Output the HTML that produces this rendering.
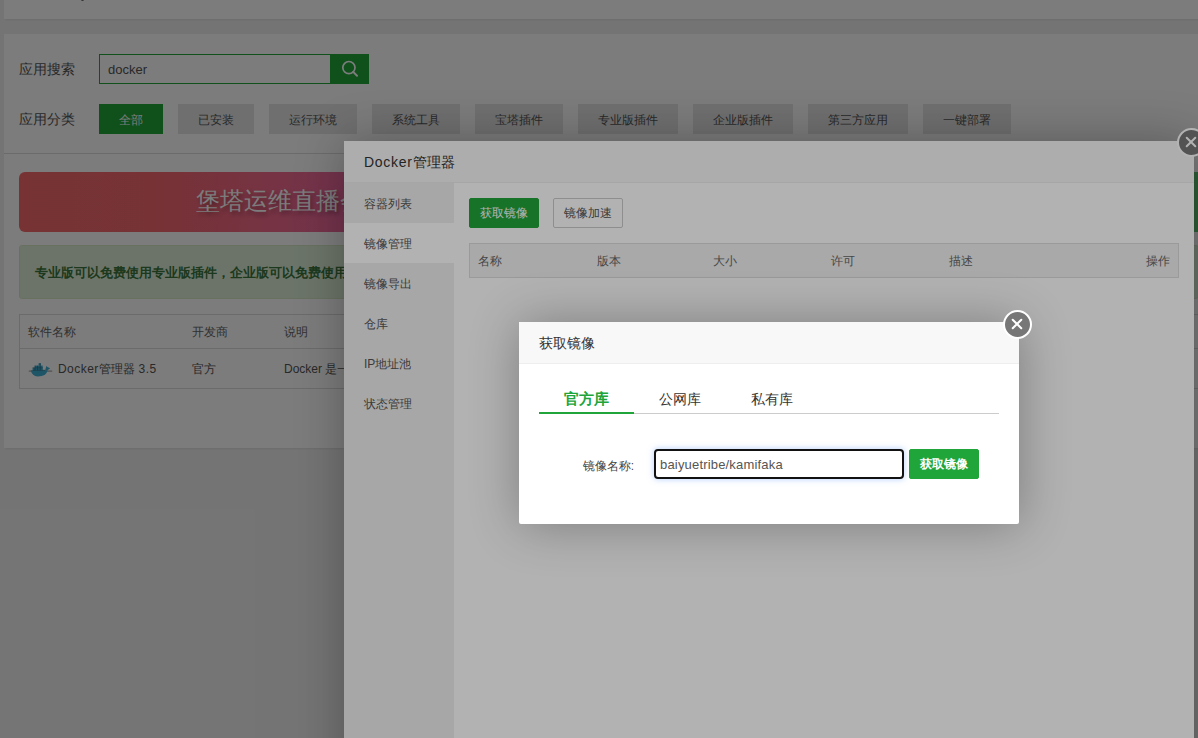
<!DOCTYPE html>
<html><head><meta charset="utf-8">
<style>
*{box-sizing:border-box;margin:0;padding:0}
html,body{width:1198px;height:738px;overflow:hidden}
body{background:#f0f0f0;font-family:"Liberation Sans",sans-serif;font-size:12px;color:#333;position:relative}
.abs{position:absolute}
.box{position:absolute;background:#fff;box-shadow:1px 1px 2px rgba(0,0,0,.08)}
.lbl{position:absolute;font-size:14px;color:#555;line-height:20px}
.cat{position:absolute;top:104px;height:30px;line-height:32px;background:#e6e6e6;color:#555;font-size:12px;text-align:center}
.cat.on{background:#20a53a;color:#fff}
.shade{position:absolute;left:0;top:0;width:1198px;height:738px;background:rgba(0,0,0,.3)}
.dlg{position:absolute;background:#fff;box-shadow:1px 1px 50px rgba(0,0,0,.3);border-radius:2px}
.ttl{position:absolute;left:0;top:0;right:0;height:42px;background:#f8f8f8;border-bottom:1px solid #eee;font-size:14px;color:#333;line-height:42px;padding-left:20px}
.side{position:absolute;left:0;top:42px;width:110px;bottom:0;background:#f0f0f0}
.side div{height:40px;line-height:42px;padding-left:20px;font-size:12px;color:#555}
.side div.on{background:#fff}
.btn{position:absolute;height:30px;line-height:28px;border-radius:2px;font-size:12px;text-align:center}
.green{background:#20a53a;color:#fff;border:1px solid #20a53a}
.white{background:#fff;color:#555;border:1px solid #ccc}
.th{position:absolute;font-size:12px;color:#666;line-height:34px;top:0}
.close{position:absolute;width:29px;height:29px;border-radius:50%;background:#777;border:2.5px solid #fff}
</style></head>
<body>
<!-- main page -->
<div class="box" style="left:4px;top:-20px;width:1200px;height:39px"></div>
<div class="abs" style="left:81px;top:-2px;width:3px;height:3px;background:#666;border-radius:50%"></div>
<div class="box" style="left:4px;top:34px;width:1200px;height:414px">
  <div style="position:absolute;left:0;right:0;top:119px;height:1px;background:#ddd"></div>
</div>
<div class="lbl" style="left:19px;top:59px">应用搜索</div>
<div class="abs" style="left:99px;top:54px;width:232px;height:30px;border:1px solid #20a53a;background:#fff;font-size:13px;color:#555;line-height:30px;padding-left:8px">docker</div>
<div class="abs" style="left:330px;top:54px;width:39px;height:30px;background:#20a53a">
  <svg width="39" height="30" viewBox="0 0 39 30"><circle cx="18.9" cy="13.6" r="6.1" fill="none" stroke="#fff" stroke-width="1.7"/><line x1="23.2" y1="17.9" x2="27" y2="21.7" stroke="#fff" stroke-width="2" stroke-linecap="round"/></svg>
</div>
<div class="lbl" style="left:19px;top:109px">应用分类</div>
<div class="cat on" style="left:99px;width:64px">全部</div>
<div class="cat" style="left:178px;width:76px">已安装</div>
<div class="cat" style="left:269px;width:88px">运行环境</div>
<div class="cat" style="left:372px;width:88px">系统工具</div>
<div class="cat" style="left:475px;width:88px">宝塔插件</div>
<div class="cat" style="left:578px;width:100px">专业版插件</div>
<div class="cat" style="left:693px;width:100px">企业版插件</div>
<div class="cat" style="left:808px;width:100px">第三方应用</div>
<div class="cat" style="left:923px;width:88px">一键部署</div>

<div class="abs" style="left:19px;top:172px;width:1300px;height:60px;border-radius:6px;background:linear-gradient(90deg,#f56a6a 0px,#f46870 150px,#f06aa0 325px,#e070a0 500px,#62c275 1170px);overflow:hidden">
  <div style="position:absolute;left:177px;top:12px;font-size:24px;color:#fff;line-height:34px;text-shadow:2px 3px 4px rgba(0,0,0,.35);letter-spacing:0">堡塔运维直播会</div>
</div>
<div class="abs" style="left:19px;top:245px;width:1180px;height:54px;background:#dff0d8;border:1px solid #d6e9c6;border-radius:3px;color:#3c763d;font-weight:bold;font-size:13px;line-height:53px;padding-left:15px">专业版可以免费使用专业版插件，企业版可以免费使用专业版及企业版插件</div>

<div class="abs" style="left:19px;top:314px;width:1180px;height:75px;border:1px solid #ddd;background:#fff">
  <div style="position:absolute;left:0;right:0;top:33px;height:1px;background:#ddd"></div>
  <div class="th" style="left:8px;color:#666;font-size:12px">软件名称</div>
  <div class="th" style="left:172px;color:#666;font-size:12px">开发商</div>
  <div class="th" style="left:264px;color:#666;font-size:12px">说明</div>
  <div class="abs" style="left:4px;top:40px;width:36px;height:27px">
    <svg width="36" height="27" viewBox="0 0 36 27"><line x1="4.8" y1="16.1" x2="28.2" y2="16.1" stroke="#444" stroke-width="0.6"/><g fill="#3fb0d4"><path d="M6.8 15.2 L23.5 15.2 Q22.5 21.4 13.8 21.4 Q8 21.2 6.8 15.2 Z"/><path d="M21 15.4 Q22 13 22.3 11 Q23.5 12.6 26.2 13.2 Q24.2 14.4 23.3 15.6 Z"/><rect x="8.6" y="12.8" width="10.2" height="2.6"/><rect x="10.8" y="10.6" width="7.9" height="2.3"/><rect x="14.6" y="8.2" width="2.2" height="2.5"/></g><g stroke="#1a5a70" stroke-width="0.5"><line x1="11" y1="10.6" x2="11" y2="15.3"/><line x1="13.6" y1="10.6" x2="13.6" y2="15.3"/><line x1="16.2" y1="8.2" x2="16.2" y2="15.3"/><line x1="8.6" y1="12.8" x2="18.8" y2="12.8"/><line x1="8.6" y1="15.3" x2="21" y2="15.3"/></g></svg>
  </div>
  <div class="th" style="left:38px;top:34px;line-height:40px;color:#555;font-size:12px"><span style="letter-spacing:0.45px">Docker</span>管理器<span style="letter-spacing:0.45px"> 3.5</span></div>
  <div class="th" style="left:172px;top:34px;line-height:40px;color:#555;font-size:12px">官方</div>
  <div class="th" style="left:264px;top:34px;line-height:40px;color:#555;font-size:12px">Docker 是一个开源的应用容器引擎</div>
</div>

<div class="shade"></div>

<!-- docker manager dialog -->
<div class="dlg" style="left:344px;top:141px;width:850px;height:700px">
  <div class="ttl"><span style="letter-spacing:0.7px">Docker</span>管理器</div>
  <div class="side">
    <div>容器列表</div>
    <div class="on">镜像管理</div>
    <div>镜像导出</div>
    <div>仓库</div>
    <div>IP地址池</div>
    <div>状态管理</div>
  </div>
  <div class="btn green" style="left:125px;top:57px;width:70px">获取镜像</div>
  <div class="btn white" style="left:209px;top:57px;width:70px">镜像加速</div>
  <div class="abs" style="left:125px;top:102px;width:710px;height:35px;border:1px solid #ddd;background:#f2f2f2">
    <div class="th" style="left:8px">名称</div>
    <div class="th" style="left:127px">版本</div>
    <div class="th" style="left:243px">大小</div>
    <div class="th" style="left:361px">许可</div>
    <div class="th" style="left:479px">描述</div>
    <div class="th" style="right:8px">操作</div>
  </div>
</div>
<div class="close" style="left:1177px;top:128px"><svg width="24" height="24" viewBox="0 0 24 24" style="position:absolute;left:0;top:0"><path d="M7.7 7.7 L16.3 16.3 M16.3 7.7 L7.7 16.3" stroke="#fff" stroke-width="2" stroke-linecap="round"/></svg></div>

<div class="shade"></div>

<!-- pull image dialog -->
<div class="dlg" style="left:519px;top:322px;width:500px;height:202px">
  <div class="ttl">获取镜像</div>
  <div class="abs" style="left:20px;top:60px;width:460px;height:32px;border-bottom:1px solid #ccc">
    <div class="abs" style="left:0;top:0;width:95px;height:32px;border-bottom:2px solid #20a53a;color:#20a53a;font-size:15px;font-weight:bold;text-align:center;line-height:34px">官方库</div>
    <div class="abs" style="left:95px;top:0;width:92px;height:32px;color:#333;font-size:14px;text-align:center;line-height:34px">公网库</div>
    <div class="abs" style="left:187px;top:0;width:92px;height:32px;color:#333;font-size:14px;text-align:center;line-height:34px">私有库</div>
  </div>
  <div class="abs" style="left:0;top:136px;width:115px;text-align:right;font-size:12px;color:#444;line-height:16px">镜像名称:</div>
  <div class="abs" style="left:135px;top:127px;width:250px;height:30px;border:2px solid #111;border-radius:4px;box-shadow:0 0 6px rgba(100,160,255,.5);font-size:13px;color:#555;line-height:28px;padding-left:4px;letter-spacing:0.18px;background:#fff">baiyuetribe/kamifaka</div>
  <div class="btn green" style="left:390px;top:127px;width:70px;font-weight:bold">获取镜像</div>
</div>
<div class="close" style="left:1002.5px;top:309.5px"><svg width="24" height="24" viewBox="0 0 24 24" style="position:absolute;left:0;top:0"><path d="M7.7 7.7 L16.3 16.3 M16.3 7.7 L7.7 16.3" stroke="#fff" stroke-width="2" stroke-linecap="round"/></svg></div>
</body></html>
